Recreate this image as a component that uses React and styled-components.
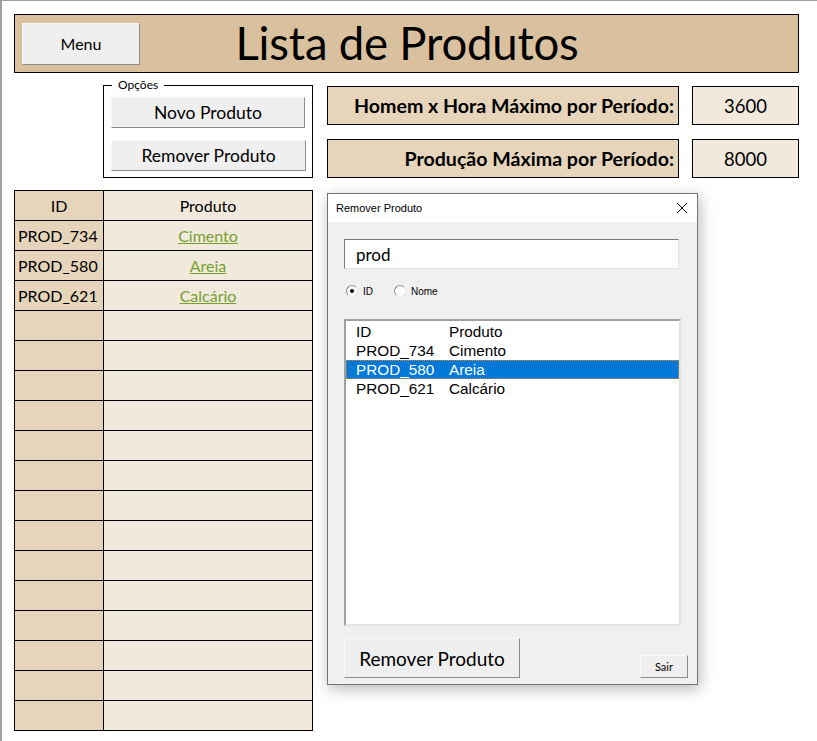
import React from 'react';
import styled, { createGlobalStyle } from 'styled-components';

const GlobalStyle = createGlobalStyle`
  html, body { margin: 0; padding: 0; background: #fff; }
  body { font-family: "Lato", "Open Sans", sans-serif; }
`;

const Sheet = styled.div`
  position: relative;
  width: 817px;
  height: 741px;
  box-sizing: border-box;
  border-top: 1px solid #a0a0a0;
  border-left: 2px solid #a0a0a0;
  padding: 13px 0 0 12px;
  overflow: hidden;
`;

const Header = styled.header`
  width: 785px;
  height: 59px;
  box-sizing: border-box;
  background: #d9c09e;
  border: 1px solid #000;
  display: flex;
  align-items: center;
  padding-left: 7px;
`;

const XlButton = styled.button`
  box-sizing: border-box;
  width: ${p => p.$w}px;
  height: ${p => p.$h}px;
  background: #efefef;
  border: 1px solid;
  border-color: #f8f8f8 #8a8a8a #8a8a8a #f8f8f8;
  font-family: "Lato", sans-serif;
  font-size: ${p => p.$size || 16}px;
  color: #000;
  padding: 0;
  cursor: pointer;
`;

const Title = styled.h1`
  flex: 1;
  margin: 0 0 2px -124px;
  text-align: center;
  font-weight: 400;
  font-size: 45.5px;
  letter-spacing: -0.2px;
  color: #000;
`;

const Body = styled.div`
  display: grid;
  grid-template-columns: 299px 472px;
  column-gap: 14px;
  margin-top: 12px;
`;

const LeftCol = styled.div`
  display: flex;
  flex-direction: column;
  gap: 12px;
`;

const Options = styled.div`
  margin: 0 0 0 89px;
  width: 210px;
  height: 93px;
  box-sizing: border-box;
  border: 1px solid #000;
  padding: 11px 0 0 7px;
  display: flex;
  flex-direction: column;
  gap: 12px;
  position: relative;
`;

const OptionsLabel = styled.span`
  position: absolute;
  top: -8px;
  left: 8px;
  padding: 0 6px;
  background: #fff;
  font-size: 12px;
  line-height: 14px;
`;

const RightCol = styled.div`
  display: flex;
  flex-direction: column;
  gap: 14px;
  padding-top: 1px;
`;

const ParamRow = styled.div`
  display: flex;
  gap: 13px;
`;

const ParamLabel = styled.div`
  width: 352px;
  height: 39px;
  box-sizing: border-box;
  background: #e6d5bb;
  border: 1px solid #000;
  display: flex;
  align-items: center;
  justify-content: flex-end;
  padding-right: 4px;
  font-weight: 700;
  font-size: 19.6px;
`;

const ParamValue = styled.div`
  width: 107px;
  height: 39px;
  box-sizing: border-box;
  background: #f2e9dc;
  border: 1px solid #000;
  display: flex;
  align-items: center;
  justify-content: center;
  font-size: 18.5px;
`;

const Table = styled.table`
  width: 299px;
  border-collapse: collapse;
  font-size: 16px;
`;

const Cell = styled.td`
  height: 29px;
  padding: 0 3px;
  border: 1px solid #000;
  background: ${p => (p.$id ? '#e6d5bb' : '#f2e9dd')};
  width: ${p => (p.$id ? '82px' : 'auto')};
  text-align: ${p => p.$align || 'center'};
  white-space: nowrap;
`;

const Link = styled.a`
  color: #74a02f;
  text-decoration: underline;
`;

const Dialog = styled.div`
  position: absolute;
  left: 325px;
  top: 192px;
  width: 371px;
  height: 492px;
  box-sizing: border-box;
  border: 1px solid #747474;
  background: #f0f0f0;
  box-shadow: 2px 4px 14px rgba(0, 0, 0, 0.28);
  display: flex;
  flex-direction: column;
  font-family: "Liberation Sans", sans-serif;
`;

const TitleBar = styled.div`
  height: 28px;
  background: #fff;
  display: flex;
  align-items: center;
  justify-content: space-between;
  padding: 0 9px 0 8px;
  font-size: 11px;
`;

const DialogBody = styled.div`
  flex: 1;
  display: flex;
  flex-direction: column;
  padding: 17px 9px 0 16px;
`;

const SearchBox = styled.div`
  width: 335px;
  height: 30px;
  box-sizing: border-box;
  background: #fff;
  border: 1px solid;
  border-color: #7a7a7a #e3e3e3 #e3e3e3 #7a7a7a;
  font-family: "Lato", sans-serif;
  font-size: 17px;
  padding-left: 11px;
  display: flex;
  align-items: center;
`;

const RadioRow = styled.div`
  display: flex;
  gap: 21px;
  margin: 15px 0 0 2px;
  height: 14px;
  align-items: center;
  font-size: 10px;
`;

const RadioItem = styled.label`
  display: flex;
  align-items: center;
  gap: 5px;
`;

const RadioDot = styled.span`
  width: 12px;
  height: 12px;
  box-sizing: border-box;
  border-radius: 50%;
  border: 1px solid;
  border-color: #8a8a8a #e8e8e8 #e8e8e8 #8a8a8a;
  background: #fff;
  display: flex;
  align-items: center;
  justify-content: center;
  &::after {
    content: '';
    width: 4px;
    height: 4px;
    border-radius: 50%;
    background: ${p => (p.$on ? '#000' : 'transparent')};
  }
`;

const ListBox = styled.div`
  margin-top: 21px;
  width: 337px;
  height: 307px;
  box-sizing: border-box;
  background: #fff;
  border: 2px solid;
  border-color: #a0a0a0 #e3e3e3 #e3e3e3 #a0a0a0;
  padding-top: 1px;
  font-size: 15.3px;
`;

const ListRow = styled.div`
  display: flex;
  height: 19px;
  line-height: 19px;
  box-sizing: border-box;
  padding-left: 10px;
  background: ${p => (p.$sel ? '#0078d7' : 'transparent')};
  color: ${p => (p.$sel ? '#fff' : '#000')};
  outline: ${p => (p.$sel ? '1px dotted #e08a2a' : 'none')};
  outline-offset: -1px;
`;

const ListCol = styled.span`
  width: ${p => p.$w}px;
`;

const Footer = styled.div`
  display: flex;
  justify-content: space-between;
  align-items: flex-end;
  margin-top: 12px;
`;

const Close = () => (
  <svg width="12" height="12" viewBox="0 0 12 12">
    <path d="M1 1 L11 11 M11 1 L1 11" stroke="#000" strokeWidth="1" fill="none" />
  </svg>
);

const rows = [
  ['PROD_734', 'Cimento'],
  ['PROD_580', 'Areia'],
  ['PROD_621', 'Calcário'],
];

export default function App() {
  const empty = Array.from({ length: 14 });
  return (
    <>
      <GlobalStyle />
      <Sheet>
        <Header>
          <XlButton $w={118} $h={42}>Menu</XlButton>
          <Title>Lista de Produtos</Title>
        </Header>
        <Body>
          <LeftCol>
            <Options>
              <OptionsLabel>Opções</OptionsLabel>
              <XlButton $w={194} $h={31} $size={17.5}>Novo Produto</XlButton>
              <XlButton $w={195} $h={31} $size={17.5}>Remover Produto</XlButton>
            </Options>
            <Table>
              <tbody>
                <tr>
                  <Cell $id>ID</Cell>
                  <Cell>Produto</Cell>
                </tr>
                {rows.map(([id, name]) => (
                  <tr key={id}>
                    <Cell $id $align="left">{id}</Cell>
                    <Cell><Link>{name}</Link></Cell>
                  </tr>
                ))}
                {empty.map((_, i) => (
                  <tr key={i}>
                    <Cell $id />
                    <Cell />
                  </tr>
                ))}
              </tbody>
            </Table>
          </LeftCol>
          <RightCol>
            <ParamRow>
              <ParamLabel>Homem x Hora Máximo por Período:</ParamLabel>
              <ParamValue>3600</ParamValue>
            </ParamRow>
            <ParamRow>
              <ParamLabel>Produção Máxima por Período:</ParamLabel>
              <ParamValue>8000</ParamValue>
            </ParamRow>
          </RightCol>
        </Body>

        <Dialog>
          <TitleBar>
            <span>Remover Produto</span>
            <Close />
          </TitleBar>
          <DialogBody>
            <SearchBox>prod</SearchBox>
            <RadioRow>
              <RadioItem><RadioDot $on />ID</RadioItem>
              <RadioItem><RadioDot />Nome</RadioItem>
            </RadioRow>
            <ListBox>
              <ListRow>
                <ListCol $w={93}>ID</ListCol>
                <ListCol>Produto</ListCol>
              </ListRow>
              {rows.map(([id, name]) => (
                <ListRow key={id} $sel={id === 'PROD_580'}>
                  <ListCol $w={93}>{id}</ListCol>
                  <ListCol>{name}</ListCol>
                </ListRow>
              ))}
            </ListBox>
            <Footer>
              <XlButton $w={176} $h={40} $size={19}>Remover Produto</XlButton>
              <XlButton $w={48} $h={23} $size={11}>Sair</XlButton>
            </Footer>
          </DialogBody>
        </Dialog>
      </Sheet>
    </>
  );
}
